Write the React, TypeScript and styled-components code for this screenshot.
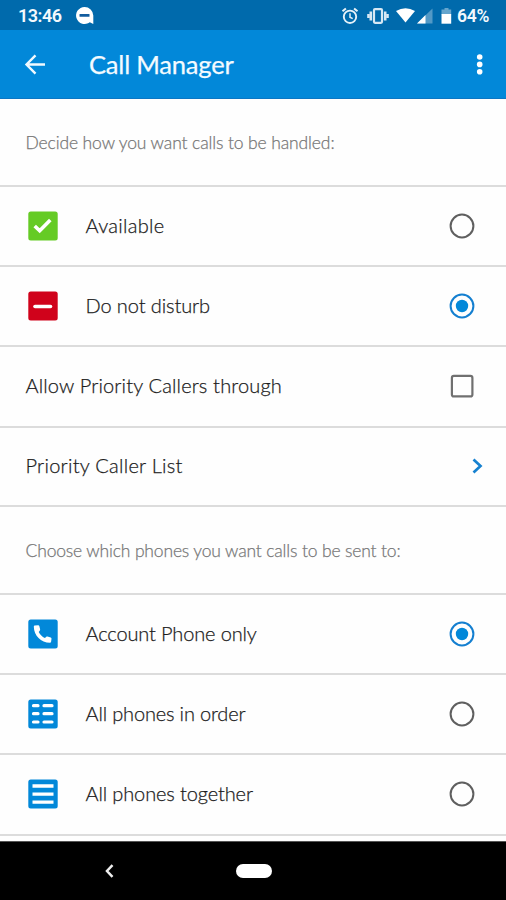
import React from "react";
import styled, { createGlobalStyle } from "styled-components";

const BLUE = "#0288d9";

const GlobalStyle = createGlobalStyle`
  * { box-sizing: border-box; }
  body { margin: 0; background: #fff; }
`;

const Screen = styled.div`
  width: 506px;
  height: 900px;
  display: flex;
  flex-direction: column;
  overflow: hidden;
  background: #fefefe;
  font-family: Lato, "Liberation Sans", sans-serif;
`;

const StatusBar = styled.header`
  height: 30px;
  flex: none;
  display: flex;
  align-items: center;
  padding: 2px 15px 0 18px;
  background: #006aac;
  color: #f4f9fd;
  font: 600 18px/28px Roboto, sans-serif;
  svg { display: block; flex: none; }
`;

const Clock = styled.span`
  width: 57px;
  letter-spacing: -0.5px;
`;

const StatusIcons = styled.div`
  display: flex;
  align-items: center;
  margin-left: auto;
`;

const VibrateIcon = styled.svg`
  margin: 0 7px 0 8px;
`;

const Battery = styled.span`
  width: 34px;
  margin-left: 4px;
  font-size: 17.5px;
  letter-spacing: -0.3px;
  white-space: nowrap;
`;

const AppBar = styled.div`
  height: 69px;
  flex: none;
  display: flex;
  align-items: center;
  padding: 0 21px 0 24px;
  background: ${BLUE};
  border-bottom: 1px solid #0b76c4;
  svg { display: block; }
`;

const Title = styled.h1`
  margin: 0 auto 0 43px;
  color: #f4fbff;
  font-size: 25.5px;
  font-weight: 400;
  line-height: 32px;
  letter-spacing: -0.2px;
  -webkit-text-stroke: 0.25px #f4fbff;
`;

const Content = styled.main`
  flex: none;
  height: 742px;
`;

const Cell = styled.div<{ $height: number }>`
  height: ${(p) => p.$height}px;
  display: flex;
  align-items: center;
  padding: 0 24px 0 25.5px;
  border-bottom: 2px solid #dcdcdc;
  svg { display: block; flex: none; }
`;

const Heading = styled.p<{ $spacing: number }>`
  margin: 0;
  padding-top: 1px;
  color: #777;
  font-size: 17.5px;
  font-weight: 300;
  line-height: 24px;
  letter-spacing: ${(p) => p.$spacing}px;
  white-space: nowrap;
  -webkit-text-stroke: 0.25px #777;
`;

const IconSlot = styled.span`
  width: 60px;
  padding-left: 2.5px;
  flex: none;
`;

const Label = styled.span<{ $spacing: number }>`
  color: #1c1c1c;
  font-size: 20px;
  font-weight: 300;
  line-height: 26px;
  padding-bottom: 2px;
  letter-spacing: ${(p) => p.$spacing}px;
  white-space: nowrap;
  -webkit-text-stroke: 0.25px #1c1c1c;
`;

const Control = styled.span<{ $inset: number }>`
  margin-left: auto;
  margin-right: ${(p) => p.$inset}px;
`;

const NavBar = styled.nav`
  flex: 1;
  display: flex;
  align-items: center;
  padding-left: 104px;
  background: #000;
  border-top: 1px solid #555;
  svg { display: block; }
`;

const HomePill = styled.span`
  width: 36px;
  height: 14px;
  margin-left: 121px;
  border-radius: 7px;
  background: #fff;
`;

type TileKind = "check" | "minus" | "phone" | "ordered" | "together";

const tileColors: Record<TileKind, string> = {
  check: "#65cb25",
  minus: "#d0021b",
  phone: BLUE,
  ordered: BLUE,
  together: BLUE,
};

function Tile({ kind }: { kind: TileKind }) {
  return (
    <svg width="30" height="30" viewBox="0 0 30 30" fill="none">
      <rect x="0.3" y="0.5" width="29.4" height="29" rx="2.5" fill={tileColors[kind]} />
      {kind === "check" && <path d="M6.7 15l5 4.8L22.3 9" stroke="#fff" strokeWidth="3.6" />}
      {kind === "minus" && <path d="M7 15.5h15.500" stroke="#fff" strokeWidth="3.6" strokeLinecap="round" />}
      {kind === "phone" && (
        <path
          d="M6.800 6.600l3.200-.4c.7-.1 1.100.2 1.300.8l.8 3.300c.1.600 0 1-.4 1.400l-1 1.200c1.600 2.900 3.300 4.600 6.200 6.100l1.200-1c.4-.4.900-.5 1.400-.4l3.200.8c.6.2.900.6.8 1.300l-.4 3.100c-.1.600-.5.900-1.100.9C12.900 23.700 6 16.400 5.800 7.700c0-.6.3-1 1-1.100z"
          fill="#fff"
        />
      )}
      {kind === "ordered" && (
        <path
          d="M5.500 6.700h4.500M16 6.700h8M5.500 14.700h4.500M16 14.700h8M5.500 23h4.500M16 23h8"
          stroke="#fff"
          strokeWidth="3.200"
          strokeLinecap="round"
        />
      )}
      {kind === "together" && (
        <path d="M4.500 7h21M4.500 15.200h21M4.500 23.200h21" stroke="#fff" strokeWidth="3.300" />
      )}
    </svg>
  );
}

function Radio({ checked }: { checked?: boolean }) {
  return (
    <svg width="26" height="26" viewBox="0 0 26 26" fill="none">
      <circle cx="13" cy="13" r="11.400" stroke={checked ? "#147fd0" : "#5f5f5f"} strokeWidth="2" />
      {checked && <circle cx="13" cy="13" r="6.200" fill={BLUE} />}
    </svg>
  );
}

function Option(props: { kind: TileKind; label: string; spacing: number; height: number; checked?: boolean }) {
  return (
    <Cell $height={props.height}>
      <IconSlot><Tile kind={props.kind} /></IconSlot>
      <Label $spacing={props.spacing}>{props.label}</Label>
      <Control $inset={7}><Radio checked={props.checked} /></Control>
    </Cell>
  );
}

export default function App() {
  return (
    <>
      <GlobalStyle />
      <Screen>
        <StatusBar>
          <Clock>13:46</Clock>
          <svg width="20" height="20" viewBox="0 0 20 20">
            <path d="M9.500 1a8.500 8.500 0 1 0 5.300 15.200L18.300 18V9.500A8.700 8.700 0 0 0 9.500 1z" fill="#fff" />
            <rect x="4.500" y="8" width="10" height="2.800" rx=".5" fill="#125c9e" />
          </svg>
          <StatusIcons>
            <svg width="18" height="18" viewBox="0 0 18 18" fill="none" stroke="#e5f1f8">
              <circle cx="9" cy="9.800" r="6.200" strokeWidth="1.900" />
              <path d="M9 6.200v4l2.700 1.500" strokeWidth="1.500" />
              <path d="M1.500 4.300l3.400-2.900M16.500 4.300l-3.400-2.900" strokeWidth="2" />
            </svg>
            <VibrateIcon width="22" height="18" viewBox="0 0 22 18" fill="none" stroke="#d7e8f4">
              <rect x="7" y="2.200" width="8" height="13.600" rx="1" strokeWidth="2.200" />
              <path d="M3.800 4.500v9M18.200 4.500v9" strokeWidth="2.600" />
              <path d="M1.500 7v4M20.500 7v4" strokeWidth="2.600" />
            </VibrateIcon>
            <svg width="40" height="18" viewBox="0 0 40 18">
              <path d="M0 4Q9.500-1.600 19 4L9.500 15.500z" fill="#fff" />
              <path d="M21 16.500L36.500 1.500V16.500z" fill="#5299c6" />
              <path d="M21 16.500l8.500-8.500V16.500z" fill="#fff" />
            </svg>
            <svg width="17" height="18" viewBox="-4 0 17 18">
              <path d="M4.500 1h4v1.500h2.700v5H1.500v-5h3z" fill="#65a5cd" />
              <path d="M1.500 7h9.700v9.700H1.500z" fill="#fff" />
            </svg>
            <Battery>64%</Battery>
          </StatusIcons>
        </StatusBar>
        <AppBar>
          <svg width="22" height="22" viewBox="0 0 22 22" fill="none" stroke="#f0f9ff" strokeWidth="2.400">
            <path d="M21 11.500H3M11.500 2.300L2.500 11.500l9 9.200" />
          </svg>
          <Title>Call Manager</Title>
          <svg width="10" height="24" viewBox="0 0 10 24" fill="#fff">
            <circle cx="4.700" cy="5" r="2.800" />
            <circle cx="4.700" cy="12.400" r="2.800" />
            <circle cx="4.700" cy="19.800" r="2.800" />
          </svg>
        </AppBar>
        <Content>
          <Cell $height={88}><Heading $spacing={-0.12}>Decide how you want calls to be handled:</Heading></Cell>
          <Option kind="check" label="Available" spacing={0.3} height={80} />
          <Option kind="minus" label="Do not disturb" spacing={-0.1} height={80} checked />
          <Cell $height={80.5}>
            <Label $spacing={0.16}>Allow Priority Callers through</Label>
            <Control $inset={8}>
              <svg width="24" height="24" viewBox="0 0 24 24" fill="none">
                <rect x="1.900" y="1.900" width="20.500" height="20.500" rx="2" stroke="#707070" strokeWidth="2.200" />
              </svg>
            </Control>
          </Cell>
          <Cell $height={79.5}>
            <Label $spacing={0.27}>Priority Caller List</Label>
            <Control $inset={-2}>
              <svg width="14" height="18" viewBox="0 0 14 18" fill="none" stroke="#1681d0" strokeWidth="2.700">
                <path d="M3.500 2.500L10.500 9l-7 6.500" />
              </svg>
            </Control>
          </Cell>
          <Cell $height={88}><Heading $spacing={-0.16}>Choose which phones you want calls to be sent to:</Heading></Cell>
          <Option kind="phone" label="Account Phone only" spacing={-0.14} height={80} checked />
          <Option kind="ordered" label="All phones in order" spacing={-0.16} height={80} />
          <Option kind="together" label="All phones together" spacing={-0.12} height={80.5} />
        </Content>
        <NavBar>
          <svg width="11" height="16" viewBox="0 0 11 16" fill="none" stroke="#eee" strokeWidth="2.500">
            <path d="M8.500 2.200L3 8l5.500 5.800" />
          </svg>
          <HomePill />
        </NavBar>
      </Screen>
    </>
  );
}
